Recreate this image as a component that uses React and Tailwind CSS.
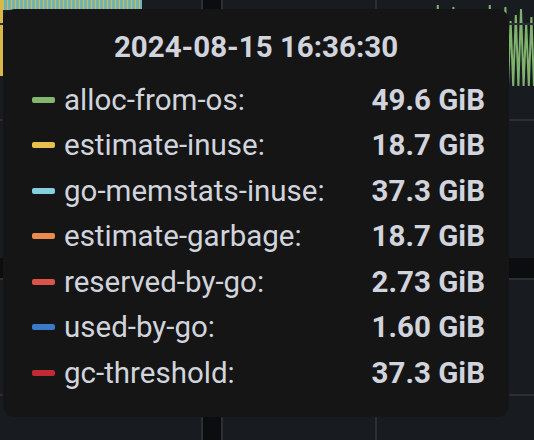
const rows = [
  { name: "alloc-from-os:", value: "49.6 GiB", color: "bg-[#85b66f]" },
  { name: "estimate-inuse:", value: "18.7 GiB", color: "bg-[#e8c04e]" },
  { name: "go-memstats-inuse:", value: "37.3 GiB", color: "bg-[#84cfe0]" },
  { name: "estimate-garbage:", value: "18.7 GiB", color: "bg-[#e98b4a]" },
  { name: "reserved-by-go:", value: "2.73 GiB", color: "bg-[#db5447]" },
  { name: "used-by-go:", value: "1.60 GiB", color: "bg-[#3b79c9]" },
  { name: "gc-threshold:", value: "37.3 GiB", color: "bg-[#bf2a33]" },
];

const GreenSpikes = () => {
  const pts = [];
  for (let i = 0; i <= 40; i++) {
    const x = i * 2.6;
    const y = i % 2 === 0 ? 86 : 4 + ((i * 7) % 20);
    pts.push(`${x},${y}`);
  }
  return (
    <svg width="104" height="88" viewBox="0 0 104 88" className="block">
      <polyline points={pts.join(" ")} fill="none" stroke="#7eb26d" strokeWidth="2" />
    </svg>
  );
};

export default function App() {
  return (
    <div
      className="relative w-[534px] h-[440px] overflow-hidden bg-[#181b1f]"
      style={{ fontFamily: "Roboto, 'Liberation Sans', sans-serif" }}
    >
      {/* chart background bits */}
      <div className="absolute left-0 top-0 w-[142px] h-[10px] bg-[repeating-linear-gradient(90deg,#6fb5b8_0px,#6fb5b8_3px,#d9b84a_3px,#d9b84a_4px)]" />
      <div className="absolute left-0 top-0 w-[3px] h-[76px] bg-[#d9b84a]" />
      <div className="absolute left-[201px] top-0 w-[22px] h-[440px] bg-[#0c0d0f] border-x-2 border-[#2c2e33]" />
      <div className="absolute left-[375px] top-0 w-[2px] h-[440px] bg-[#2c2e33]" />
      <div className="absolute left-[430px] top-0">
        <GreenSpikes />
      </div>
      <div className="absolute left-0 right-0 top-[23px] h-[2px] bg-[#2c2e33]" />
      <div className="absolute left-0 right-0 top-[119px] h-[2px] bg-[#2c2e33]" />
      <div className="absolute left-0 right-0 top-[258px] h-[22px] bg-[#0c0d0f] border-b-2 border-[#2c2e33]" />
      <div className="absolute left-0 right-0 top-[394px] h-[2px] bg-[#2c2e33]" />

      {/* tooltip */}
      <div className="absolute left-[3px] top-[9px] w-[506px] h-[408px] rounded-[12px] bg-[#151515] text-[#d1d4dc] pt-[18px] pl-[29px] pr-[24px]">
        <div className="text-center text-[29.5px] leading-[40px] font-bold pr-[5px]">
          2024-08-15 16:36:30
        </div>
        <div className="mt-[10px] flex flex-col">
          {rows.map((r) => (
            <div key={r.name} className="flex items-center h-[45.5px] text-[29.5px]">
              <span className={`w-[23px] h-[6px] rounded-[2px] ${r.color}`} />
              <span className="ml-[9px] flex-1">{r.name}</span>
              <span className="font-bold">{r.value}</span>
            </div>
          ))}
        </div>
      </div>
    </div>
  );
}
